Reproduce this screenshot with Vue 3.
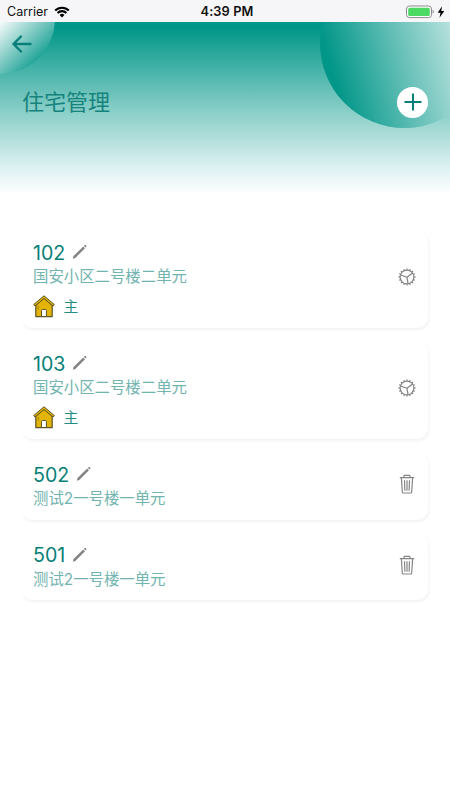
<script setup>
const homes = [
  { id: 1, room: '102', address: '国安小区二号楼二单元', primary: true },
  { id: 2, room: '103', address: '国安小区二号楼二单元', primary: true },
  { id: 3, room: '502', address: '测试2一号楼一单元', primary: false },
  { id: 4, room: '501', address: '测试2一号楼一单元', primary: false }
]
const teeth = Array.from({ length: 16 }, (_, i) => i * 22.5)
</script>

<template>
  <main class="screen">
    <div class="status">
      <div class="carrier">
        <span>Carrier</span>
        <svg width="16" height="12" viewBox="0 0 16 12" fill="none" stroke="#000" stroke-width="2.1">
          <path d="M1.2 4.5a9.6 9.6 0 0 1 13.6 0M3.6 7a6.2 6.2 0 0 1 8.8 0" />
          <path d="M8 11.4 5.6 9a3.4 3.4 0 0 1 4.8 0z" fill="#000" stroke="none" />
        </svg>
      </div>
      <span class="time">4:39 PM</span>
      <div class="power">
        <svg width="29" height="14" viewBox="0 0 29 14">
          <rect x="1.5" y="1" width="25" height="11.6" rx="3" fill="#fff" stroke="#8a8a8e" />
          <rect x="3.2" y="2.7" width="21.6" height="8.2" rx="1.5" fill="#4cd964" />
          <path d="M27.6 4.8q1.2.6 1.2 2t-1.2 2z" fill="#8a8a8e" />
        </svg>
        <svg width="8" height="12" viewBox="0 0 8 12"><path d="M5 .3.7 6.7h2.8L2.5 11.7 7.3 4.9H4.3z" fill="#000" /></svg>
      </div>
    </div>

    <header class="header">
      <div class="bubble bubble-left"></div>
      <div class="bubble bubble-right"></div>
      <button class="back" aria-label="返回">
        <svg width="20" height="18" viewBox="0 0 20 18" fill="none" stroke="#087f78" stroke-width="2.4" stroke-linecap="round" stroke-linejoin="round">
          <path d="M18.5 9H1.5M9 1.5 1.5 9 9 16.5" />
        </svg>
      </button>
      <div class="title-row">
        <h1>住宅管理</h1>
        <button class="add" aria-label="添加">
          <svg width="18" height="18" viewBox="0 0 18 18" stroke="#087f78" stroke-width="2.1"><path d="M9 .5v17M.5 9h17" /></svg>
        </button>
      </div>
    </header>

    <section class="list">
      <article v-for="home in homes" :key="home.id" class="card">
        <div class="details">
          <div class="room">
            <span>{{ home.room }}</span>
            <svg width="16" height="16" viewBox="0 0 16 16" fill="#858585">
              <path d="m.8 14.8.7-2.700L11.200 2.400l1.800 1.800-9.700 9.700zM11.900 1.800l.7-.7q.5-.4 1 0l.7.7q.4.5 0 1l-.7.7z" />
            </svg>
          </div>
          <div class="address">{{ home.address }}</div>
          <div v-if="home.primary" class="primary">
            <svg width="22" height="23" viewBox="0 0 22 23">
              <path d="M2.8 10 11 2.900l8.200 7.100v11.600H2.800z" fill="#e3b50b" stroke="#5a5427" stroke-width="1.2" stroke-linejoin="round" />
              <path d="M8.500 21.500v-6q0-1 1-1h2.900q1 0 1 1v6z" fill="#fff" stroke="#5a5427" />
              <path d="m.7 9.500L11 .8l10.300 8.700-1.300 1.500-9-7.500-9 7.500z" fill="#e3b50b" stroke="#5a5427" stroke-linejoin="round" />
              <path d="M5.200 11v3.500" stroke="#83701c" stroke-width=".7" />
            </svg>
            <span>主</span>
          </div>
        </div>
        <svg v-if="home.primary" class="action" width="18" height="18" viewBox="0 0 18 18" fill="none" stroke="#828282">
          <circle cx="9" cy="9" r="6.9" stroke-width="1.2" />
          <path v-for="angle in teeth" :key="angle" d="M9 .5v1.3" :transform="`rotate(${angle} 9 9)`" stroke-width="1.3" />
          <path d="M9 9.300 2.500 7M9 9.300l5.500-4.200M9 9.300l1 6.400" stroke-width="1.2" />
        </svg>
        <svg v-else class="action" width="18" height="20" viewBox="0 0 18 20" fill="none" stroke="#858585">
          <path d="M1.800 3.700h14.400M6 3.400V2q0-.7.7-.7h4.600q.7 0 .7.7v1.400M3.400 4l.9 14q.1 1 1 1h7.400q.9 0 1-1l.9-14M6.500 6.200l.4 10.600M9 6.200v10.600M11.500 6.200l-.4 10.600" stroke-width="1.2" />
        </svg>
      </article>
    </section>
  </main>
</template>

<style>
body { margin: 0; background: #fff; }
</style>

<style scoped>
.screen {
  width: 450px;
  height: 800px;
  overflow: hidden;
  background: #fff;
  color: #087f78;
  font-family: Inter, "Noto Sans CJK SC", sans-serif;
}
.status {
  display: grid;
  grid-template-columns: 1fr auto 1fr;
  align-items: center;
  height: 22px;
  box-sizing: border-box;
  padding: 1px 5px 0 7px;
  background: #f6f6f8;
  color: #111;
  font-size: 12.5px;
}
.carrier, .power { display: flex; align-items: center; }
.carrier { gap: 6px; }
.power { justify-content: flex-end; gap: 3px; }
.time { padding-left: 2px; font-weight: 600; font-size: 12.8px; letter-spacing: .1px; }
.header {
  position: relative;
  height: 174px;
  overflow: hidden;
  background: linear-gradient(#009688 3%, #80cbc4 48%, #b2dfdb 67%, #e0f2f4 85%, #fff 99%);
}
.bubble { position: absolute; border-radius: 50%; }
.bubble-left {
  left: -55px;
  top: -58px;
  width: 110px;
  height: 110px;
  background: linear-gradient(135deg, #fff 50%, #009688 91%);
}
.bubble-right {
  left: 320px;
  top: -63px;
  width: 169px;
  height: 169px;
  background: linear-gradient(75deg, #009688 12%, #fff 99%);
}
button { display: flex; align-items: center; justify-content: center; border: 0; padding: 0; }
.back { position: relative; width: 44px; height: 43px; background: transparent; }
.title-row {
  position: relative;
  display: flex;
  align-items: center;
  justify-content: space-between;
  height: 32px;
  margin-top: 21px;
  padding: 0 22px;
}
h1 { margin: 0; font-size: 22px; font-weight: 400; line-height: 32px; color: #16837c; }
.add { width: 31px; height: 31px; border-radius: 50%; background: #fff; }
.list { display: flex; flex-direction: column; gap: 13px; padding: 34px 22px 0; }
.card {
  display: flex;
  align-items: center;
  justify-content: space-between;
  box-sizing: border-box;
  padding: 11px 12px 10px 11px;
  border-radius: 11px;
  background: #fff;
  box-shadow: 1px 2px 3px rgba(0, 0, 0, .05);
}
.room { display: flex; align-items: center; gap: 7px; height: 25px; font-size: 19.6px; }
.room span { margin-top: -2px; }
.room svg { margin-top: -3px; }
.address { height: 21.6px; line-height: 21px; font-size: 15.4px; font-weight: 400; color: #72b4af; }
.primary { display: flex; align-items: center; gap: 8.5px; height: 23px; margin-top: 7.5px; font-size: 14.8px; }
.primary span { margin-top: -3px; color: #238c85; }
.action { margin-top: -5px; }
</style>
